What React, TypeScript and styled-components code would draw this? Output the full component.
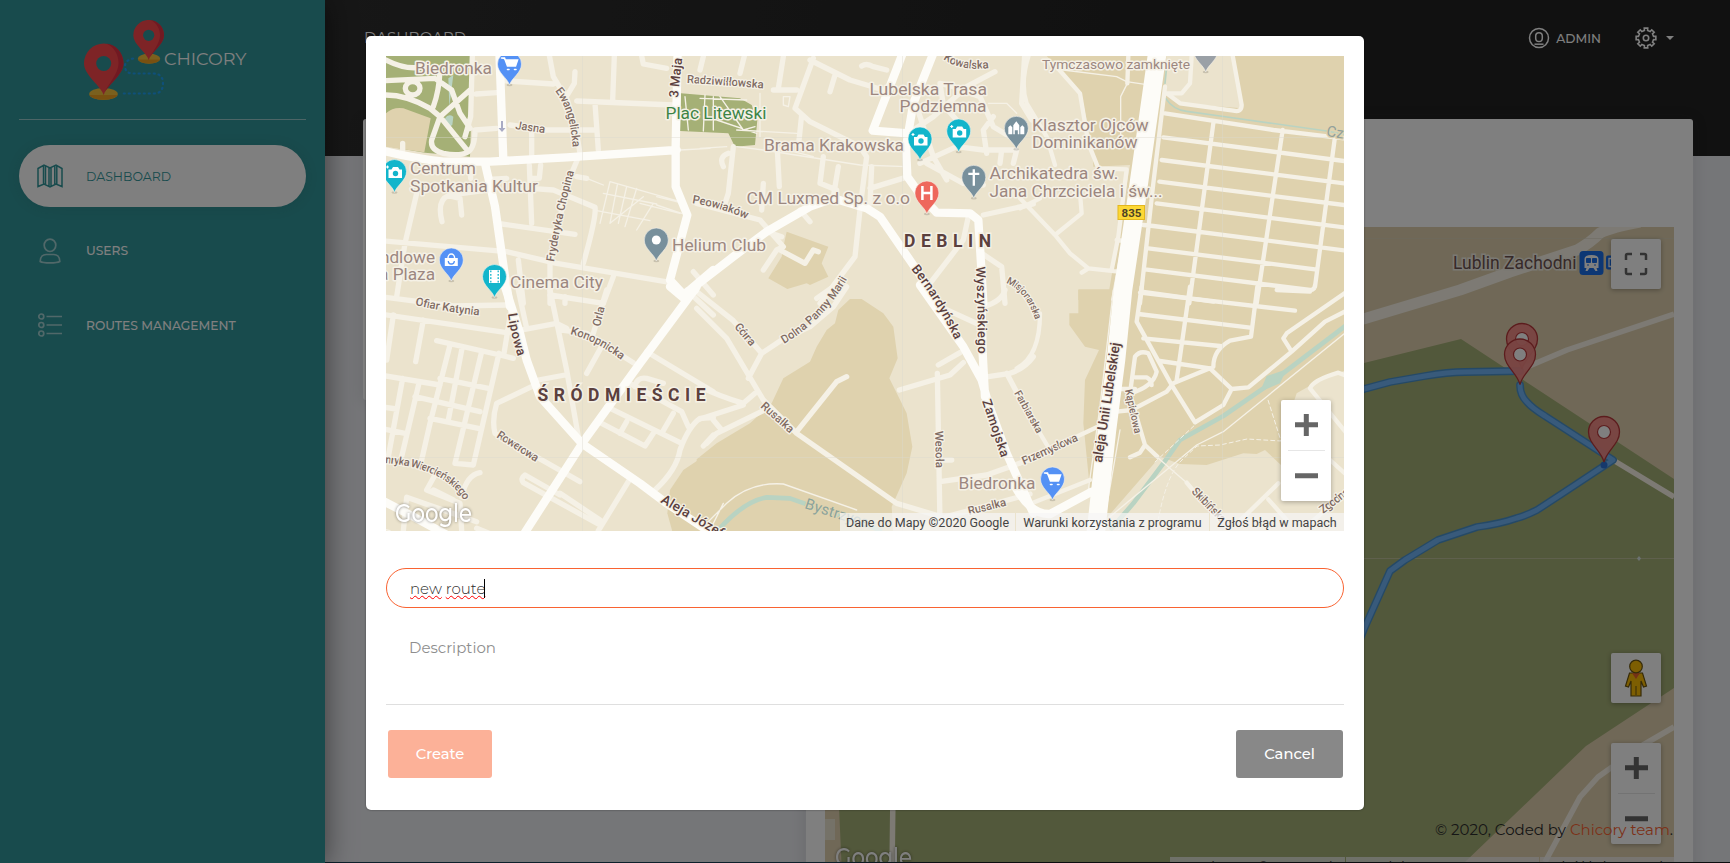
import React, { useId } from "react";
import styled, { createGlobalStyle, css } from "styled-components";

const fontStack = `"Montserrat", "Inter", "Liberation Sans", sans-serif`;
const mapFont = `Roboto, "Liberation Sans", sans-serif`;

const palette = {
  teal: "#31979b",
  accent: "#f96332",
  page: "#ebecf1",
  land: "#ebe3cd",
  tan: "#dfd2ae",
  park: "#a5b076",
  water: "#b9d3c2",
  minor: "#f5f1e6",
  major: "#fdfcf8",
  poi: "#9c8780",
  street: "#806b63",
  strong: "#5b403e",
};

const GlobalStyle = createGlobalStyle`
  *, *::before, *::after { box-sizing: border-box; }
  html, body { margin: 0; height: 863px; overflow: hidden; }
  body { background: ${palette.page}; font-family: ${fontStack}; color: #2c2c2c; }
`;

/* ---------- page shell ---------- */

const Shell = styled.div`
  position: relative;
  display: flex;
  width: 1730px;
  height: 863px;
  overflow: hidden;
`;

const Sidebar = styled.aside`
  position: relative;
  z-index: 1;
  flex: 0 0 325px;
  padding: 20px 19px 0;
  background: ${palette.teal};
  box-shadow: 0 2px 22px rgba(0, 0, 0, 0.2), 0 2px 30px rgba(0, 0, 0, 0.35);
`;

const Brand = styled.div`
  display: flex;
  align-items: flex-start;
  height: 100px;
  padding-left: 65px;
  border-bottom: 1px solid rgba(255, 255, 255, 0.5);
`;

const BrandName = styled.span`
  padding-top: 27px;
  font-size: 17.6px;
  line-height: 24px;
  color: #fff;
`;

const Nav = styled.nav`
  display: flex;
  flex-direction: column;
  gap: 12.5px;
  padding-top: 25px;
`;

const NavItem = styled.a<{ $active?: boolean }>`
  display: flex;
  align-items: center;
  gap: 22px;
  height: 62px;
  padding-left: 17px;
  border-radius: 31px;
  font-size: 12.3px;
  font-weight: 500;
  color: #fff;
  svg { flex: none; opacity: 0.55; }
  ${(p) =>
    p.$active &&
    css`
      background: #fff;
      font-size: 12.5px;
      font-weight: 400;
      color: ${palette.teal};
      box-shadow: 0 1px 15px 1px rgba(39, 39, 39, 0.1);
      svg { opacity: 1; }
    `}
`;

const Main = styled.main`
  flex: 1;
  display: flex;
  flex-direction: column;
  min-width: 0;
`;

const Hero = styled.header`
  flex: 0 0 156px;
  display: flex;
  align-items: flex-start;
  justify-content: space-between;
  padding: 27px 56px 0 39px;
  background: linear-gradient(100deg, #2e2e2e, #222 60%);
  color: #fff;
`;

const HeroTitle = styled.span`
  font-size: 15px;
  line-height: 22px;
`;

const HeroActions = styled.div`
  display: flex;
  align-items: center;
  height: 22px;
`;

const UserLink = styled.a`
  display: flex;
  align-items: center;
  gap: 6px;
  margin-right: 34px;
  font-size: 12.3px;
  font-weight: 500;
`;

const GearLink = styled.a`
  display: flex;
  align-items: center;
  gap: 9px;
`;

const Caret = styled.i`
  border: 4px solid transparent;
  border-top-color: #fff;
  border-bottom: 0;
`;

const Content = styled.div`
  display: flex;
  align-items: flex-start;
  gap: 20px;
  margin-top: -37px;
  padding: 0 37px 0 38px;
`;

const Card = styled.section<{ $grow?: boolean; $height: number }>`
  flex: ${(p) => (p.$grow ? "0 0 887px" : "0 0 423px")};
  height: ${(p) => p.$height}px;
  padding: 108px 19px 0;
  border-radius: 3px;
  background: #fff;
  box-shadow: 0 1px 15px 1px rgba(39, 39, 39, 0.1);
`;

const Footer = styled.footer`
  position: absolute;
  right: 57px;
  bottom: 22px;
  font-size: 15px;
  line-height: 22px;
  font-weight: 400;
  a { color: ${palette.accent}; }
`;

const BottomEdge = styled.div`
  position: absolute;
  left: 0;
  right: 0;
  bottom: 0;
  height: 1px;
  background: linear-gradient(90deg, #3a1c20, #1b3f55 8%, #1b3f55 48%, #16181c 55%);
`;

/* ---------- map widgets ---------- */

const MapFrame = styled.div<{ $height: number }>`
  position: relative;
  height: ${(p) => p.$height}px;
  overflow: hidden;
  background: ${palette.land};
  font-family: ${mapFont};
  > svg { display: block; }
`;

const MapButton = styled.div<{ $top?: number; $bottom?: number }>`
  position: absolute;
  right: 13px;
  ${(p) => (p.$top !== undefined ? `top: ${p.$top}px;` : `bottom: ${p.$bottom}px;`)}
  display: flex;
  align-items: center;
  justify-content: center;
  width: 50px;
  height: 50px;
  border-radius: 2px;
  background: #fff;
  box-shadow: 0 1px 5px rgba(0, 0, 0, 0.3);
`;

const ZoomBox = styled(MapButton)`
  height: 101px;
`;

const Attribution = styled.div`
  position: absolute;
  right: 0;
  bottom: 0;
  display: flex;
  gap: 1px;
  height: 18px;
  font-size: 12.5px;
  line-height: 19.5px;
  color: #444;
  white-space: nowrap;
`;

const Credit = styled.span<{ $width: number }>`
  width: ${(p) => p.$width}px;
  text-align: center;
  background: rgba(245, 245, 245, 0.72);
`;

/* ---------- modal ---------- */

const Overlay = styled.div`
  position: absolute;
  z-index: 2;
  inset: 0;
  display: flex;
  align-items: flex-start;
  justify-content: center;
  padding-top: 36px;
  background: rgba(0, 0, 0, 0.5);
`;

const Dialog = styled.div`
  display: flex;
  flex-direction: column;
  width: 998px;
  height: 774px;
  padding: 20px;
  border-radius: 5px;
  background: #fff;
  box-shadow: 0 0 2px rgba(0, 0, 0, 0.5);
`;

const Field = styled.div`
  display: flex;
  align-items: center;
  height: 40px;
  margin-top: 37px;
  padding: 0 23px;
  border: 1px solid ${palette.accent};
  border-radius: 20px;
  font-size: 15px;
  font-weight: 300;
  color: #2c2c2c;
`;

const Misspelt = styled.span`
  text-decoration: underline wavy #f00 1px;
  text-decoration-skip-ink: none;
  text-underline-offset: 1px;
`;

const TextCursor = styled.i`
  width: 1px;
  height: 19px;
  margin-left: -1px;
  background: #000;
`;

const Description = styled.div`
  height: 96px;
  padding: 30px 23px 0;
  font-size: 15px;
  line-height: 20px;
  font-weight: 400;
  color: #8e8e8e;
`;

const Actions = styled.div`
  display: flex;
  justify-content: space-between;
  padding: 25px 1px 0 2px;
  border-top: 1px solid #dfdfdf;
`;

const Button = styled.button<{ $tone: string; $width: number }>`
  width: ${(p) => p.$width}px;
  height: 48px;
  border: 0;
  border-radius: 3px;
  background: ${(p) => p.$tone};
  color: #fff;
  font: 500 14.7px/20px ${fontStack};
`;

/* ---------- interface icons ---------- */

const RouteLogo = () => (
  <svg width="80" height="80" viewBox="0 0 80 80" fill="none">
    <path
      d="M49 38.500C43 40 41 42.500 41 46C41 51 44 53.500 49 53.500H69C76 53.500 79 57 79 63.500S76 73.500 70 73.500H36"
      stroke="#1ea0f5"
      strokeWidth="2.200"
      strokeLinecap="round"
      strokeDasharray="1 4"
    />
    <ellipse cx="19.500" cy="74" rx="14.300" ry="6" fill="#f5c13c" />
    <path d="M5.500 75a14.300 6 0 0 0 28 0z" fill="#f0a020" />
    <path d="M19.700 75C17 66 0 55 0 43.500a19.700 20 0 0 1 39.500 0C39.500 55 22 66 19.700 75z" fill="#fc484c" />
    <path d="M19.700 75c2.300-9 19.800-20 19.800-31.500 0-11-8-19-17-20 8 4 12 11 12 20 0 11-12 22-14.800 31.500z" fill="#e23344" />
    <circle cx="19.700" cy="43.500" r="7.500" fill={palette.teal} />
    <ellipse cx="65" cy="38.700" rx="11.200" ry="5" fill="#f5c13c" />
    <path d="M54 39.500a11.200 5 0 0 0 22 0z" fill="#f0a020" />
    <path d="M64.700 40C63 33 49.300 24.500 49.300 15.500a15.300 15.500 0 0 1 30.700 0C80 24.500 66.500 33 64.700 40z" fill="#fc484c" />
    <path d="M64.700 40C66.500 33 80 24.500 80 15.500 80 7 74 1 67 .3c6 3 9 9 9 15.200 0 8.500-9 17.500-11.300 24.500z" fill="#e23344" />
    <circle cx="64.700" cy="15.300" r="5.600" fill={palette.teal} />
  </svg>
);

const FoldedMapIcon = () => (
  <svg width="28" height="26" viewBox="0 0 28 26" fill="none" stroke={palette.teal} strokeWidth="1.500">
    <path d="M2 5.500 8 2l6 3 6-3 6 3.500v18L20 21l-6 3-6-3-6 2.500zM7.500 2.500v18M9.500 3v18M13 5v18M15 5v18M18.800 3v18M20.800 3v18" />
  </svg>
);

const PersonIcon = () => (
  <svg width="28" height="28" viewBox="0 0 28 28" fill="none" stroke="#fff" strokeWidth="1.700">
    <ellipse cx="14" cy="8.300" rx="5.800" ry="6.200" />
    <path d="M4.200 24.500c0-5 3-7 6-7h7.600c3 0 6 2 6 7-3 1.800-16.600 1.800-19.600 0z" />
  </svg>
);

const BulletsIcon = () => (
  <svg width="28" height="28" viewBox="0 0 28 28" fill="none" stroke="#fff" strokeWidth="1.700">
    <circle cx="5.300" cy="5.500" r="2.500" />
    <circle cx="5.300" cy="14" r="2.500" />
    <circle cx="5.300" cy="22.500" r="2.500" />
    <path d="M10.500 5.500H26M10.500 14H26M10.500 22.500H26" />
  </svg>
);

const AdminIcon = () => (
  <svg width="22" height="22" viewBox="0 0 22 22" fill="none" stroke="#fff" strokeWidth="1.500">
    <circle cx="11" cy="11" r="9.500" />
    <rect x="7.700" y="5.800" width="6.600" height="8.800" rx="3.300" />
    <path d="M6.500 17.200h9" />
  </svg>
);

const GearIcon = () => {
  const teeth = Array.from({ length: 8 }, (_, i) => {
    const at = (deg: number, r: number) => {
      const a = ((i * 45 + deg) * Math.PI) / 180;
      return `${(11 + r * Math.cos(a)).toFixed(2)} ${(11 + r * Math.sin(a)).toFixed(2)}`;
    };
    return `${at(-12, 7.7)} L${at(-10, 10)} L${at(10, 10)} L${at(12, 7.7)}`;
  });
  return (
    <svg width="22" height="22" viewBox="0 0 22 22" fill="none" stroke="#fff" strokeWidth="1.600">
      <path d={`M${teeth.join(" L")}Z`} />
      <circle cx="11" cy="11" r="2.700" />
    </svg>
  );
};

const ZoomControl = ({ bottom }: { bottom: number }) => (
  <ZoomBox $bottom={bottom}>
    <svg width="50" height="101" viewBox="0 0 50 101">
      <path d="M14 24.700h23M25.300 14v22M14 75.700h23" stroke="#666" strokeWidth="5" />
      <path d="M7 50.500h37" stroke="#e6e6e6" />
    </svg>
  </ZoomBox>
);

const Credits = () => (
  <Attribution>
    <Credit $width={175}>Dane do Mapy ©2020 Google</Credit>
    <Credit $width={193}>Warunki korzystania z programu</Credit>
    <Credit $width={134}>Zgłoś błąd w mapach</Credit>
  </Attribution>
);

const GoogleMark = ({ x, y }: { x: number; y: number }) => (
  <text
    x={x}
    y={y}
    textLength="77"
    lengthAdjust="spacingAndGlyphs"
    fontFamily="Montserrat, Lato, sans-serif"
    fontSize="25"
    fontWeight="500"
    fill="#fff"
    style={{ filter: "drop-shadow(0 0 1.500px rgba(0,0,0,.45))" }}
  >
    Google
  </text>
);

/* ---------- city map ---------- */

type Sheet = { x: number; y: number; minor: string; major: string; thin: string; river?: string };

// Each sheet holds one sixth of the map, digitised at three units per pixel.
const sheets: Sheet[] = [
  {
    x: 380,
    y: 50,
    minor:
      "M18 30Q80 62 130 50M18 135Q80 135 150 175L180 200L265 305M18 92L165 85L215 120L240 190L270 235M270 120L180 200L155 270Q150 300 190 310Q240 320 265 305Q285 290 285 240L350 235M180 60Q178 120 160 170M277 18L272 200L255 260M76 115a22 20 0 1 0 44 0a22 20 0 1 0-44 0M288 132L350 128M370 92L520 102M505 0L520 80L562 150L590 250L600 310L575 370L540 500L510 640L510 760M585 65L583 100L562 135M590 153L880 165M703 18L698 150M645 160L655 300M390 225L500 240L640 240M455 250L455 330M785 18L790 42L860 55M68 280V300M110 430L75 580L50 740M186 515Q170 450 205 437L240 445L245 495M0 572L380 605L530 640L870 697M448 345L455 520M482 345L478 385L455 385M365 522L585 553M450 415L520 420L645 472Q650 500 610 640M590 380L620 385M415 630L430 760M700 680L670 760M325 388L380 385M270 350L272 385M940 665L1000 735M210 435L320 420",
    major: "M0 300Q100 325 190 335L330 335L560 322L890 300M358 0L370 330M315 340L345 470L375 680L390 770M893 0L887 290L887 410L922 495L870 690L912 735L1000 660",
    thin: "M620 385L670 405M690 395L660 520M690 395L900 455M900 300L990 295M900 490L780 460M712 405L690 520M770 415L735 530M740 410L715 520M820 460L770 540M650 482L810 512M670 430L830 462M690 520L790 440M830 440L910 460M830 465L905 490M975 135L970 243M915 140L925 240",
  },
  {
    x: 700,
    y: 50,
    minor:
      "M340 25L285 175L330 215L480 290L500 320L482 460L465 620L360 760M485 48Q500 38 520 50L560 60M220 120L290 120M135 10L120 70M250 20L235 115M330 30L450 90L550 120M405 75L390 125M100 290L85 430L75 460M85 310Q55 320 70 350M-10 460L180 510L250 590L230 600L190 660M200 545L245 560M240 600L315 640L340 600L355 605M232 300L238 410M370 320L360 400L410 420M415 350L400 440M515 350L510 460M510 415L625 380M305 195L295 290M680 340L790 400L850 405M660 340L770 290L850 300L940 300M650 170L700 320L740 390M770 210L730 165L720 100L760 110L840 140L880 230L930 260M885 65L800 110L700 200L640 240M975 0L965 160L995 210M850 495L1000 462M805 500L790 570L690 700M845 610L905 650L915 760M860 310L850 240L880 200M905 300L900 340M950 300L940 340M190 400L185 480M300 480L330 515M10 20L0 60",
    major: "M612 0L518 242L625 250M700 10L640 160L618 290L622 380L665 440L710 488L810 490L835 510L843 640L850 760M-10 705L100 620L200 545L330 470L400 445L500 475L540 500L650 660L720 770",
    thin: "M0 295L80 290M110 290L190 300L480 345L620 350M110 240L290 250M0 145L140 150M40 140L40 240M60 140L130 240L165 230M50 210L170 250M180 130L180 260M250 140L270 140L265 170L250 165ZM220 290L340 320M865 160L920 160L950 190",
  },
  {
    x: 1020,
    y: 50,
    minor:
      "M25 20Q0 100 20 160L80 260L105 345M105 45L180 130L205 280L235 355L320 358L295 560L275 660M635 0L665 165Q665 188 640 182L480 160L440 130M515 18L510 100L485 130L440 130M180 430L185 490L105 555L0 445M105 555L150 610L205 655L295 665M205 655L185 668M0 475L60 445M435 110L400 400L360 760M435 190L760 240L980 266M430 262L980 334M425 330L980 401M418 395L980 466M410 460L980 533M370 525L400 528L980 602M385 595L885 658M375 658L870 720Q885 720 885 705M365 725L580 755M580 220L508 760M788 240L710 760M945 260L885 710M290 570L330 575M325 18L322 100",
    major: "",
    thin: "M130 60L290 80L320 95L375 103M322 100L302 140V260M340 400L275 750",
    river: "M440 50L435 100M437 145Q460 180 500 184L600 198L920 243L980 255",
  },
  {
    x: 380,
    y: 290,
    minor:
      "M0 20L220 48L380 45M0 72L380 128L530 100L560 115M40 75L20 210M130 90L107 215M395 50L372 190M170 152L360 195L400 205M210 165L150 400L125 510M247 170L205 390M305 185L225 520L280 525L357 190M180 265L325 295M105 320L300 365M150 385L295 415M0 255L180 285M68 265L25 500M0 415L75 430M0 350L50 357M118 275L65 500M415 0L440 115M510 0L560 240L595 440M475 270L555 255M455 290L350 340Q335 390 345 430L600 575M540 615L435 555Q420 565 430 578L660 705M540 610L660 690M748 570L655 722M545 120L620 130L760 218M670 160L620 250M680 0L640 130M800 185L1000 305M555 20V40M510 15L670 40M680 350L905 460M655 395L795 468L820 430M740 395L720 430M765 290Q770 260 800 265L850 280M740 275L905 365L925 410M880 370L845 430M1000 383L960 385Q925 410 900 480Q890 540 825 600M920 0L1000 75M970 468L1000 435M165 555L140 600L240 640L245 722M160 600L220 630M245 620Q260 555 300 548M80 622L290 695M80 622L70 722M290 715L340 735",
    major: "M375 -10L420 130L440 210L480 320L605 460L780 580L860 640L1010 740M950 -10L780 220L610 455L430 735M870 -10L912 25L945 0M0 628L100 680L210 740",
    thin: "M0 715L30 722",
  },
  {
    x: 700,
    y: 290,
    minor:
      "M-10 5L100 92L185 190L145 265M185 190L245 150L330 110L400 50L440 -10M-10 55L80 145L190 330L290 430L590 640L740 685M290 425L410 275L440 260M0 290Q60 320 130 340L165 310M0 387L130 345M20 460L50 430L190 362M40 390L65 420M350 25L400 -10M598 300L750 255L790 218M715 225L780 188M712 250L720 700M720 575L860 555L1000 505M720 510L755 510M865 260L930 250Q975 235 1000 200M920 250L1000 400M720 50L840 105M850 50Q905 35 915 0M740 680L990 612",
    major: "M660 -15L790 170L845 270L865 340L920 490L1000 670M843 -10L848 190L855 320",
    thin: "M20 700L80 640Q150 575 250 582L470 660M40 700L70 640",
    river: "M55 720Q130 635 200 622L270 625L340 650L540 720",
  },
  {
    x: 1020,
    y: 290,
    minor:
      "M365 -10L350 95L455 285L525 397L610 345L635 297L685 292L815 185L915 95L980 62M510 -10L470 270M712 -10L693 140L630 152Q580 180 580 230M360 8L825 62M355 72L690 113M370 145L600 168M420 213L570 235L635 297M815 185L790 145L800 130L980 5M330 310L345 200Q360 180 385 190L410 245Q400 290 330 310M345 262L380 262Q395 270 395 285M290 297L345 297M290 365L335 360L440 305L460 280L570 235M335 330L375 465L412 500M375 465L360 488L330 502M660 692L775 580M745 628L800 690M500 578L560 650M870 295Q880 270 955 248L980 258M870 295L980 430M930 510L980 555M870 700L980 605M0 520L230 412M60 430L90 480M-10 235Q60 200 60 70M35 640L210 570M770 0L870 5",
    major: "M-20 580Q30 675 90 672L215 605",
    thin: "M270 680L530 465L610 425L740 320L980 125M410 500L500 578M280 0L240 350L205 600M300 420L260 650",
    river: "M275 715L340 640L430 520L480 450L610 378L730 295L980 105",
  },
];

const scaled = (x: number, y: number) => `translate(${x} ${y}) scale(.33333)`;

const riverWidth = (s: Sheet) => (s.y > 100 ? 14 : 5);

type LabelProps = { d: string; text: string; size?: number; len?: number; color?: string; weight?: number; halo?: string };

const StreetLabel = ({ d, text, size = 11.5, len, color = palette.street, weight = 500, halo = palette.minor }: LabelProps) => {
  const id = useId();
  return (
    <>
      <path id={id} d={d} fill="none" />
      <text fontSize={size} fontWeight={weight} fill={color} stroke={halo} strokeWidth="2.500" paintOrder="stroke" strokeLinejoin="round">
        <textPath href={`#${id}`} textLength={len}>
          {text}
        </textPath>
      </text>
    </>
  );
};

const streets: LabelProps[] = [
  { d: "M943 59Q962 73 996 67", text: "Kowalska", len: 48 },
  { d: "M687 83Q725 85 770 89", text: "Radziwiłłowska", len: 77 },
  { d: "M515 129L550 134", text: "Jasna", len: 30 },
  { d: "M555 91Q572 112 573 155", text: "Ewangelicka", len: 60 },
  { d: "M554 262Q562 215 576 164", text: "Fryderyka Chopina", len: 93 },
  { d: "M692 203Q723 208 751 221", text: "Peowiaków", len: 57 },
  { d: "M415 305Q450 313 486 316", text: "Ofiar Katynia", len: 65 },
  { d: "M600 327L606 302", text: "Orla", len: 20 },
  { d: "M570 334Q600 342 626 364", text: "Konopnicka", len: 58 },
  { d: "M734 327L756 353", text: "Górna", len: 26 },
  { d: "M784 344Q828 318 852 270", text: "Dolna Panny Marii", len: 92 },
  { d: "M1006 283Q1027 291 1037 325", text: "Misjonarska", len: 49, size: 10 },
  { d: "M1014 393L1040 439", text: "Farbiarska", len: 47, size: 10.5 },
  { d: "M935 431L936 473", text: "Wesoła", len: 37 },
  { d: "M1024 465L1084 438", text: "Przemysłowa", len: 60 },
  { d: "M760 407L795 438", text: "Rusałka", len: 40 },
  { d: "M969 515L1013 504", text: "Rusałka", len: 39 },
  { d: "M1125 390L1136 440", text: "Kąpielowa", len: 45, size: 10.5 },
  { d: "M1191 492L1225 527", text: "Skibińska", len: 44 },
  { d: "M1323 514L1352 492", text: "Zgodna", len: 34 },
  { d: "M496 437L542 466", text: "Rowerowa", len: 47 },
  { d: "M385 463Q446 468 465 502", text: "nryka Wiercieńskiego", len: 91, size: 11 },
  { d: "M678 98L683 50", text: "3 Maja", len: 40, size: 13, color: palette.strong },
  { d: "M508 314Q511 338 521 366", text: "Lipowa", len: 44, size: 13, color: palette.strong },
  { d: "M911 269Q936 300 958 346", text: "Bernardyńska", len: 84, size: 13, color: palette.strong },
  { d: "M976 267Q978 310 978 360", text: "Wyszyńskiego", len: 87, size: 13, color: palette.strong },
  { d: "M982 401L1003 463", text: "Zamojska", len: 60, size: 13, color: palette.strong },
  { d: "M1102 463L1121 338", text: "aleja Unii Lubelskiej", len: 121, size: 14, color: palette.strong },
  { d: "M660 502L740 549", text: "Aleja Józefa", len: 78, size: 13.5, color: palette.strong },
  { d: "M804 508Q840 520 875 530", text: "Bystrzyca", len: 66, size: 15, color: "#8aa39c", weight: 400, halo: palette.tan },
  { d: "M1326 136L1360 141", text: "Cz", size: 15, color: "#93a19b", weight: 400, halo: palette.tan },
];

type Place = [text: string, x: number, y: number, len: number, color?: string, size?: number];

const places: Place[] = [
  ["Biedronka", 415, 73.7, 77],
  ["Centrum", 410, 174, 66],
  ["Spotkania Kultur", 410, 191.5, 128],
  ["ndlowe", 380, 262.5, 55],
  ["a Plaza", 379, 280, 56],
  ["Cinema City", 510, 287.7, 93],
  ["Helium Club", 672, 250.7, 94],
  ["Plac Litewski", 665.5, 118.7, 101, "#3d8446"],
  ["Lubelska Trasa", 869.5, 94.7, 117.5],
  ["Podziemna", 899.5, 112.2, 87],
  ["Brama Krakowska", 764, 150.7, 140],
  ["CM Luxmed Sp. z o.o", 746.5, 203.5, 163.5],
  ["Klasztor Ojców", 1032, 130.8, 116.5],
  ["Dominikanów", 1032, 148.3, 105.5],
  ["Archikatedra św.", 989.5, 179.3, 129],
  ["Jana Chrzciciela i św...", 989.5, 197, 173],
  ["Tymczasowo zamknięte", 1042, 68.5, 148, undefined, 13.5],
  ["Biedronka", 958.5, 489.2, 77],
];

const glyphs = {
  cart: <path d="M-8-6h3l3 8h8l2-6H-4M-2 5.500h1.500M5 5.500h1.500" fill="#fff" stroke="#fff" strokeWidth="1.600" strokeLinecap="round" />,
  camera: (
    <>
      <path d="M-6-2h3l1.500-2.500h5L5-2h2.500v8.500h-13.500z" fill="#fff" />
      <circle cx="1" cy="2" r="2.700" fill="#12b5cb" />
      <path d="M-7-6v3M-8.500-4.500h3" stroke="#fff" strokeWidth="1.200" />
    </>
  ),
  bag: (
    <>
      <path d="M-6.500-2h13v8h-13z" fill="#fff" />
      <path d="M-3.300-2a3.300 4 0 0 1 6.600 0" fill="none" stroke="#fff" strokeWidth="1.400" />
      <path d="M-3 1a3 3 0 0 0 6 0" fill="none" stroke="#4f8ff7" strokeWidth="1.300" />
    </>
  ),
  film: (
    <>
      <path d="M-5.500-6.500h11v13h-11z" fill="#fff" />
      <path d="M-3.700-6v12M3.700-6v12" stroke="#12b5cb" strokeWidth="1.300" strokeDasharray="1.800 1.600" />
    </>
  ),
  dot: <circle r="4.500" fill="#fff" />,
  church: <path d="M-8 6V-1l2-2 2 2v7zM-3 6v-9l3-4 3 4v9H1.500V2h-3v4zM4 6v-7l2-2 2 2v7z" fill="#fff" />,
  cross: <path d="M0-8V8.500M-5.500-3.500h11" stroke="#fff" strokeWidth="2.300" />,
  hospital: <path d="M-4.500-7V7M4.500-7V7M-4.500 0h9" stroke="#fff" strokeWidth="2.500" />,
  none: null,
};

type PinSpec = [kind: keyof typeof glyphs, x: number, y: number, color: string];

const pins: PinSpec[] = [
  ["cart", 509.5, 64, "#5491f5"],
  ["camera", 394.5, 171.500, "#12b5cb"],
  ["bag", 451.3, 260, "#5491f5"],
  ["film", 494.5, 276.500, "#12b5cb"],
  ["dot", 656.3, 240, "#78909c"],
  ["camera", 920, 139, "#12b5cb"],
  ["camera", 958.7, 131, "#12b5cb"],
  ["church", 1016.3, 128.300, "#78909c"],
  ["cross", 973.8, 177.300, "#78909c"],
  ["hospital", 926.9, 193, "#ee675c"],
  ["cart", 1052.500, 479, "#5491f5"],
  ["none", 1205.700, 51, "#9aa0a6"],
];

const CityMap = () => (
  <svg width="958" height="475" viewBox="386 56 958 475" fontFamily={mapFont}>
    <rect x="386" y="56" width="958" height="475" fill={palette.land} />
    <g transform={scaled(380, 50)}>
      <path d="M0 0H280L270 320L135 308L0 285Z" fill={palette.park} />
      <path d="M18 190Q40 170 70 175L152 205L133 307L0 288V190Z" fill={palette.tan} />
      <path d="M195 205Q205 190 220 200L217 225L200 235ZM205 85l15-10-12 95z" fill={palette.water} />
      <path d="M903 130L1080 145L1115 165L1132 210L1125 285L1065 290L1045 250L900 243Z" fill={palette.park} />
    </g>
    <g transform={scaled(700, 50)} fill={palette.tan}>
      <path d="M260 545L385 590L365 640L385 680L330 705L320 700L262 717L205 685L245 620L250 590Z" />
    </g>
    <g transform={scaled(1020, 50)} fill={palette.tan}>
      <path d="M80 18H980V750H280L175 750V718H268L330 345L220 350L215 280L185 140L110 50Z" />
      <path d="M440 0H632L665 175L480 160L432 130Z" fill={palette.land} />
    </g>
    <g transform={scaled(380, 290)} fill={palette.tan}>
      <path d="M1000 480L910 540L870 600L862 670L880 735H1000Z" />
    </g>
    <g transform={scaled(700, 290)} fill={palette.tan}>
      <path d="M-10 508L50 460L150 400L215 340L250 265L330 215L350 170L380 120L405 100L415 60L450 27H485L550 70L580 110L593 205L568 265L620 370L637 470L620 550L575 650L580 735H-10Z" />
    </g>
    <g transform={scaled(1020, 290)} fill={palette.tan}>
      <path d="M175 0H980V735H240L210 600L190 400L195 270L237 180L195 170L148 105V70H175Z" />
      <path d="M255 690L420 500L480 522L560 525L670 490L710 492L735 480L783 525L800 400L830 310L900 270L980 240V735H240Z" fill={palette.land} />
      <path d="M720 305L740 258L800 238L780 280Z" fill={palette.water} />
    </g>

    <g fill="none" strokeLinejoin="round" strokeLinecap="round">
      {sheets.map((s) => (
        <g key={`${s.x}-${s.y}`} transform={scaled(s.x, s.y)}>
          {s.river && <path d={s.river} stroke={palette.water} strokeWidth={riverWidth(s)} />}
          <path d={s.thin} stroke={palette.minor} strokeWidth="4" />
          <path d={s.minor} stroke={palette.minor} strokeWidth={s.x > 1000 ? 13 : 16} />
        </g>
      ))}
      {sheets.map((s) => (
        <g key={`${s.x}-${s.y}`} transform={scaled(s.x, s.y)}>
          <path d={s.major} stroke={palette.major} strokeWidth="25" />
        </g>
      ))}
      <path
        d="M1147 660Q1150 490 1182 460L1197 446L1220 445L1247 439L1281 441L1268 400M1155 462L1197 423"
        stroke={palette.minor}
        strokeDasharray="4 3"
      />
      <path d="M1158 48L1146 133L1135 210L1123 290L1116 360L1107 430L1096 531" stroke={palette.major} strokeWidth="18.500" />
      <path d="M582.500 56V531M902.500 56V531M1222.500 56V531M386 137.500H1344M386 457.500H1344" stroke="#dcd8cf" strokeWidth=".6" opacity=".7" />
    </g>
    <path d="M501 121v7h-2.500l3.500 4 3.500-4h-2.500v-7z" fill="#a9abc4" />

    {streets.map((s) => (
      <StreetLabel key={s.text + s.d} {...s} />
    ))}
    {places.map(([text, x, y, len, color, size]) => (
      <text
        key={`${text}-${x}-${y}`}
        x={x}
        y={y}
        textLength={len}
        lengthAdjust="spacingAndGlyphs"
        fontSize={size ?? 16}
        fill={color ?? palette.poi}
        stroke={palette.minor}
        strokeWidth="3"
        strokeLinejoin="round"
        paintOrder="stroke"
      >
        {text}
      </text>
    ))}
    <g fontSize="17.500" fontWeight="700" fill={palette.strong} stroke={palette.minor} strokeWidth="3" paintOrder="stroke">
      <text x="904" y="247" textLength="87">DEBLIN</text>
      <text x="537.500" y="401" textLength="168">ŚRÓDMIEŚCIE</text>
    </g>
    {pins.map(([kind, x, y, color]) => (
      <g key={`${kind}-${x}`} transform={`translate(${x} ${y})`}>
        <ellipse cy="21" rx="3" ry="1.300" fill="#000" opacity=".15" />
        <path d="M0 21C-2 14-12 9-12 0A12 12 0 1 1 12 0C12 9 2 14 0 21Z" fill={color} stroke="#f7f4ec" strokeWidth=".6" />
        {glyphs[kind]}
      </g>
    ))}
    <rect x="1118" y="205.500" width="26.500" height="14" fill="#fdd835" stroke="#e3b71e" />
    <text x="1131.500" y="217" textAnchor="middle" fontSize="11.500" fontWeight="700" fill="#4d4326">835</text>
    <GoogleMark x={395} y={522} />
  </svg>
);

/* ---------- route map ---------- */

const RouteMarker = ({ x, y }: { x: number; y: number }) => (
  <g transform={`translate(${x} ${y})`}>
    <path d="M0 30C-3 18-15.500 12-15.500 0A15.500 15.500 0 1 1 15.500 0C15.500 12 3 18 0 30Z" fill="#f28985" fillOpacity=".95" stroke="#b8393b" strokeWidth="1.300" />
    <circle r="6.500" fill="#fff" stroke="#b8393b" strokeWidth="1.200" />
  </g>
);

const TransitIcon = ({ x }: { x: number }) => (
  <g transform={`translate(${x} 251)`}>
    <rect width="24" height="24" rx="3.500" fill="#1a6fe8" />
    <path d="M5 8q0-4 7-4t7 4v9H5zM7 17h3l-2 3H6zM17 17h-3l2 3h2z" fill="#fff" />
    <path d="M7 7.500h4v4H7zM13 7.500h4v4h-4zM7.500 14h2M14.500 14h2" fill="#1a6fe8" stroke="#1a6fe8" />
  </g>
);

const SmallTransitIcon = ({ x }: { x: number }) => (
  <g transform={`translate(${x} 255.500)`}>
    <rect width="14" height="14" rx="2" fill="#1a6fe8" />
    <path d="M3 3h8v8H3zM5 5h2.500M5 8h2.500" fill="none" stroke="#fff" strokeWidth="1.300" />
  </g>
);

const routeLine =
  "M1300 410L1364 389L1390 382L1425 376Q1448 372 1465 372L1520 371M1520 385Q1520 395 1527 402Q1532 408 1545 416L1613 460L1560 495L1537 510Q1525 516 1517 518Q1500 524 1477 527L1438 540L1405 560L1390 571L1364 629L1340 690";

const RouteMap = () => (
  <svg width="849" height="648" viewBox="825 227 849 648" fontFamily={mapFont}>
    <rect x="825" y="227" width="849" height="648" fill="#e0d1af" />
    <path d="M830 600L1200 410L1364 363L1461 339L1674 479V688L1586 746L1465 862L1450 875H842Z" fill={palette.park} />
    <path d="M825 819h10v21h-10z" fill="#ebe4d0" />
    <g fill="none" stroke="#faf5e9" strokeLinejoin="round">
      <path d="M1340 326L1460 290L1510 272L1577 250Q1590 243 1600 233Q1612 227 1640 222" strokeWidth="11" />
      <path d="M1674 314L1567 350L1520 370M1613 460L1674 497M1674 727L1643 745L1598 777L1580 797L1545 862M893 790L892 875" strokeWidth="5.500" />
    </g>
    <path d="M825 238.500H1674M825 558.500H1674" stroke="#d9d3c0" strokeWidth=".7" opacity=".7" />
    <path d="M1639 556l2 2.500-2 2.500-2-2.500z" fill="#d9e4e4" />
    <g fill="none" strokeLinecap="round" strokeLinejoin="round">
      <path d={routeLine} stroke="#4b93cc" strokeWidth="7.800" />
      <path d={routeLine} stroke="#70b4f6" strokeWidth="5" />
    </g>
    <circle cx="1604" cy="465" r="3.500" fill="#2d73d8" />
    <RouteMarker x={1522} y={339} />
    <RouteMarker x={1520} y={354.5} />
    <RouteMarker x={1604} y={432} />
    <text x="1453" y="269" textLength="123.500" fontSize="17.500" fill="#6d5350" stroke="#f5f1e6" strokeWidth="3" paintOrder="stroke">
      Lublin Zachodni
    </text>
    <TransitIcon x={1579.5} />
    <SmallTransitIcon x={1606} />
    <GoogleMark x={835} y={866} />
  </svg>
);

const Pegman = () => (
  <svg width="24" height="40" viewBox="0 0 24 40">
    <path d="M5.500 15h13l4 13-3 1-2.500-6v15H7V23l-2.500 6-3-1z" fill="#fbbc05" stroke="#6b5410" strokeWidth="1.200" />
    <path d="M12 28v9" stroke="#6b5410" />
    <path d="M8 15h8l-4 6z" fill="#e8642c" />
    <circle cx="12" cy="8.500" r="6.300" fill="#fbbc05" stroke="#6b5410" strokeWidth="1.200" />
  </svg>
);

/* ---------- app ---------- */

export default function App() {
  return (
    <Shell>
      <GlobalStyle />
      <Sidebar>
        <Brand>
          <RouteLogo />
          <BrandName>CHICORY</BrandName>
        </Brand>
        <Nav>
          <NavItem $active>
            <FoldedMapIcon />
            DASHBOARD
          </NavItem>
          <NavItem>
            <PersonIcon />
            USERS
          </NavItem>
          <NavItem>
            <BulletsIcon />
            ROUTES MANAGEMENT
          </NavItem>
        </Nav>
      </Sidebar>

      <Main>
        <Hero>
          <HeroTitle>DASHBOARD</HeroTitle>
          <HeroActions>
            <UserLink>
              <AdminIcon />
              ADMIN
            </UserLink>
            <GearLink>
              <GearIcon />
              <Caret />
            </GearLink>
          </HeroActions>
        </Hero>
        <Content>
          <Card $height={281} />
          <Card $grow $height={776}>
            <MapFrame $height={648}>
              <RouteMap />
              <MapButton $top={12}>
                <svg width="24" height="24" viewBox="0 0 24 24" fill="none" stroke="#666" strokeWidth="2.500">
                  <path d="M2 8V3.500Q2 2 3.500 2H8M16 2h4.500Q22 2 22 3.500V8M22 16v4.500q0 1.500-1.500 1.500H16M8 22H3.500Q2 22 2 20.500V16" />
                </svg>
              </MapButton>
              <MapButton $bottom={172}>
                <Pegman />
              </MapButton>
              <ZoomControl bottom={31} />
              <Credits />
            </MapFrame>
          </Card>
        </Content>
      </Main>

      <Footer>
        © 2020, Coded by <a>Chicory team</a>.
      </Footer>

      <Overlay>
        <Dialog>
          <MapFrame $height={475}>
            <CityMap />
            <ZoomControl bottom={30} />
            <Credits />
          </MapFrame>
          <Field>
            <Misspelt>new</Misspelt>&nbsp;<Misspelt>route</Misspelt>
            <TextCursor />
          </Field>
          <Description>Description</Description>
          <Actions>
            <Button $tone="#fcb198" $width={104}>Create</Button>
            <Button $tone="#888" $width={107}>Cancel</Button>
          </Actions>
        </Dialog>
      </Overlay>
      <BottomEdge />
    </Shell>
  );
}
